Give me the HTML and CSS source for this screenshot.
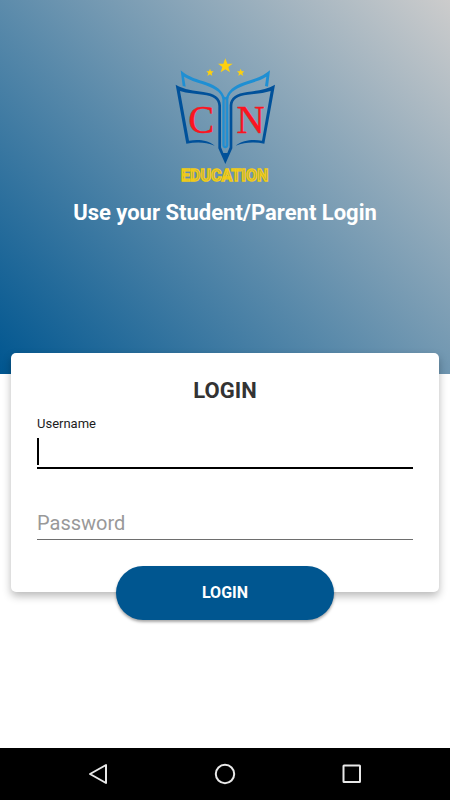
FILE: index.html
```html
<!DOCTYPE html>
<html lang="en">
<head>
<meta charset="utf-8">
<meta name="viewport" content="width=device-width, initial-scale=1">
<title>CN Education Login</title>
<link rel="stylesheet" href="styles.css">
</head>
<body>
<main class="screen">
  <header class="hero">
    <svg class="logo" viewBox="0 0 360 420" role="img" aria-label="CN Education">
      <g fill="#fdd00e">
        <path d="M181 25L187 41H203L190 51L195 67L181 58L167 67L172 51L159 41H175Z"/>
        <path d="M135 56L138 64H146L140 70L142 78L135 73L127 78L130 70L124 64H132Z"/>
        <path d="M227 56L230 64H238L232 70L235 78L227 73L220 78L222 70L216 64H224Z"/>
      </g>
      <g fill="#1f8fd3">
        <path d="M47 61C63 76 87 86 115 94C145 103 168 116 177 138Q181 146 185 138C194 116 216 103 246 94C274 86 298 76 315 61L309 110L300 108L304 80C286 91 270 95 250 102C220 112 192 124 190 148L190 286Q189 295 181 295Q173 295 172 286L172 148C170 124 141 112 111 102C91 95 75 91 57 80L62 110L53 108Z"/>
      </g>
      <path d="M181 150V286" fill="none" stroke="#5d8fb3" stroke-width="5" stroke-linecap="round"/>
      <g fill="#00519a">
        <path d="M32 104C58 119 88 122 115 126C148 130 167 143 168 166L168 292L175 309H187L194 292L194 166C195 143 214 130 247 126C274 122 304 119 330 104L298 281C266 276 241 276 212 287C234 270 262 268 291 272L317 123C295 130 272 131 248 134C218 138 202 147 202 168L202 295L181 342L160 295L160 168C160 147 144 138 114 134C90 131 67 130 45 123L72 272C101 268 128 270 149 287C121 276 96 276 64 281Z"/>
      </g>
      <g class="logo-initials">
        <text x="109" y="249">C</text>
        <text x="257" y="249">N</text>
      </g>
      <text class="logo-word" x="179" y="394">EDUCATION</text>
    </svg>
    <h1 class="hero-title">Use your Student/Parent Login</h1>
  </header>

  <form class="card">
    <h2 class="card-title">LOGIN</h2>
    <label class="label" for="username">Username</label>
    <div class="field field-active">
      <input class="input" id="username" type="text" autocomplete="username">
    </div>
    <div class="field field-password">
      <input class="input" id="password" type="password" placeholder="Password" aria-label="Password" autocomplete="current-password">
    </div>
    <button class="submit" type="submit">LOGIN</button>
  </form>

  <nav class="navbar" aria-label="System">
    <button class="nav-button" type="button" aria-label="Back">
      <svg class="nav-icon" viewBox="0 0 24 24"><path d="M20 3v18L4 12z"/></svg>
    </button>
    <button class="nav-button" type="button" aria-label="Home">
      <svg class="nav-icon" viewBox="0 0 24 24"><circle cx="12" cy="12" r="9.2"/></svg>
    </button>
    <button class="nav-button" type="button" aria-label="Recent apps">
      <svg class="nav-icon" viewBox="0 0 24 24"><rect x="3.500" y="3.500" width="16.500" height="16.500" rx="0.500"/></svg>
    </button>
  </nav>
</main>
</body>
</html>
```
FILE: styles.css
```css
* {
  box-sizing: border-box;
}

body {
  margin: 0;
  background: #fff;
  font-family: Roboto, "Liberation Sans", sans-serif;
}

.screen {
  display: flex;
  flex-direction: column;
  min-height: 100vh;
}

.hero {
  display: flex;
  flex-direction: column;
  align-items: center;
  padding: 50px 16px 147px;
  background: linear-gradient(45deg, #005690, #cccccc);
}

.logo {
  width: 120px;
  height: 140px;
}

.logo-initials {
  fill: #fb1420;
  stroke: #fb1420;
  stroke-width: 1px;
  font-family: "Liberation Serif", serif;
  font-size: 117px;
  text-anchor: middle;
}

.logo-word {
  fill: #a9ac55;
  stroke: #f2cb14;
  stroke-width: 4px;
  font-size: 48px;
  font-weight: 700;
  text-anchor: middle;
}

.hero-title {
  margin: 8px 0 0;
  color: #fff;
  font-size: 22px;
  font-weight: 700;
  line-height: 29px;
  text-align: center;
}

.card {
  display: flex;
  flex-direction: column;
  margin: -21px 11px 0;
  padding: 24px 26px 0;
  border-radius: 5px;
  background: #fff;
  box-shadow: 0 4px 8px rgba(0, 0, 0, 0.28);
}

.card-title {
  margin: 0;
  color: #333;
  font-size: 22px;
  font-weight: 700;
  line-height: 28px;
  text-align: center;
}

.label {
  margin-top: 11px;
  color: #1c1c1c;
  font-size: 13px;
  line-height: 16px;
}

.field {
  position: relative;
  border-bottom: 1px solid #6e6e6e;
}

.field-active {
  margin-top: 3px;
  border-bottom: 2px solid #000;
}

.field-active::before {
  content: "";
  position: absolute;
  top: 3px;
  left: 0;
  width: 2px;
  height: 27px;
  background: #000;
}

.field-password {
  margin-top: 38px;
}

.input {
  display: block;
  width: 100%;
  height: 32px;
  padding: 0;
  border: 0;
  outline: 0;
  background: transparent;
  color: #1c1c1c;
  font: 400 20px/32px Roboto, "Liberation Sans", sans-serif;
}

.input::placeholder {
  color: #999;
  opacity: 1;
}

.submit {
  align-self: center;
  width: 58%;
  height: 54px;
  margin: 26px 0 -28px;
  border: 0;
  border-radius: 27px;
  background: #005690;
  box-shadow: 0 2px 3px rgba(0, 0, 0, 0.35);
  color: #fff;
  font: 700 16px/20px Roboto, "Liberation Sans", sans-serif;
}

.navbar {
  display: flex;
  justify-content: space-around;
  margin-top: auto;
  padding: 0 35px;
  background: #000;
}

.nav-button {
  display: flex;
  flex: 1;
  align-items: center;
  justify-content: center;
  height: 52px;
  padding: 0;
  border: 0;
  background: transparent;
}

.nav-icon {
  width: 24px;
  height: 24px;
  fill: none;
  stroke: #e8e8e8;
  stroke-width: 2px;
  stroke-linejoin: round;
}
```
